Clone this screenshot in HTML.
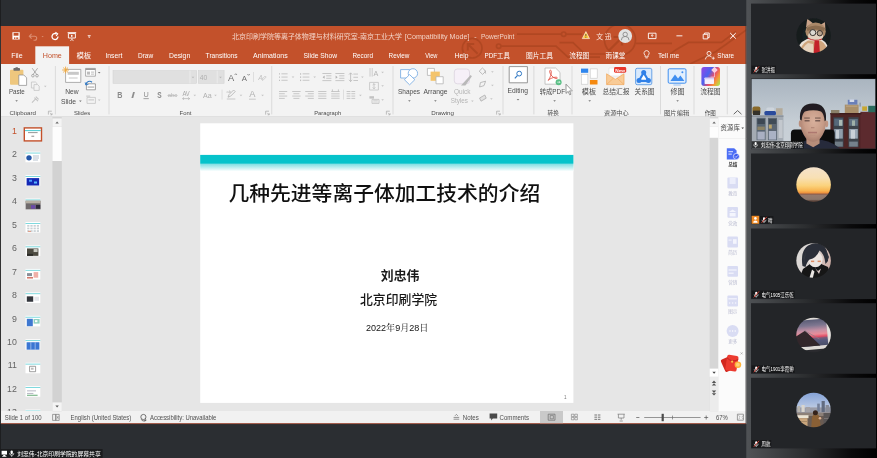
<!DOCTYPE html>
<html lang="zh"><head><meta charset="utf-8"><title>PowerPoint screen share</title>
<style>
html,body{margin:0;padding:0;background:#2b2e32;overflow:hidden}
svg{display:block;font-family:"Liberation Sans","Noto Sans CJK SC",sans-serif;filter:blur(0.4px)}
text{white-space:pre}
</style></head><body>
<svg width="877" height="458" viewBox="0 0 877 458">
<defs>
<linearGradient id="pg" x1="0" x2="1" y1="0" y2="0"><stop offset="0" stop-color="#505356"/><stop offset="0.45" stop-color="#2c2e30"/><stop offset="0.8" stop-color="#0a0a0b"/><stop offset="1" stop-color="#000"/></linearGradient>
<clipPath id="tb"><rect x="1" y="26" width="745.3" height="38"/></clipPath>
<linearGradient id="fl" x1="0" y1="0.2" x2="1" y2="0.8"><stop offset="0" stop-color="#8a4ae6"/><stop offset="0.35" stop-color="#4a62f0"/><stop offset="0.6" stop-color="#e8506a"/><stop offset="0.82" stop-color="#f59a3a"/><stop offset="1" stop-color="#b8d84a"/></linearGradient>
<clipPath id="tp"><rect x="1" y="117.2" width="51" height="293.8"/></clipPath>
<linearGradient id="tg" x1="0" x2="0" y1="0" y2="1"><stop offset="0" stop-color="#06c3cb"/><stop offset="0.5" stop-color="#06c3cb"/><stop offset="0.57" stop-color="#86e0e4"/><stop offset="1" stop-color="#ffffff"/></linearGradient>
<clipPath id="a1"><circle cx="813.6" cy="35.6" r="17.3"/></clipPath>
<filter id="bl" x="-5%" y="-5%" width="110%" height="110%"><feGaussianBlur stdDeviation="0.75"/></filter>
<radialGradient id="catbg" cx="0.5" cy="0.5" r="0.6"><stop offset="0" stop-color="#1d2a2a"/><stop offset="1" stop-color="#0e1415"/></radialGradient>
<clipPath id="v2"><rect x="751.6" y="79" width="123.6" height="69.4"/></clipPath>
<linearGradient id="wall" x1="0" x2="0" y1="0" y2="1"><stop offset="0" stop-color="#a6b1bc"/><stop offset="0.28" stop-color="#b4bec8"/><stop offset="0.6" stop-color="#c6ced5"/><stop offset="1" stop-color="#cbd2d8"/></linearGradient>
<filter id="bl2" x="-10%" y="-10%" width="120%" height="120%"><feGaussianBlur stdDeviation="1.1"/></filter>
<radialGradient id="skin" cx="0.52" cy="0.4" r="0.62"><stop offset="0" stop-color="#d8b09c"/><stop offset="0.6" stop-color="#c79c88"/><stop offset="1" stop-color="#a67c6c"/></radialGradient>
<clipPath id="a3"><circle cx="813.6" cy="184.6" r="17.3"/></clipPath>
<linearGradient id="sun" x1="0" x2="0" y1="0" y2="1"><stop offset="0" stop-color="#f4e2cc"/><stop offset="0.3" stop-color="#f8e0b4"/><stop offset="0.52" stop-color="#fbd27c"/><stop offset="0.66" stop-color="#f8b450"/><stop offset="0.725" stop-color="#ee8e3a"/><stop offset="0.75" stop-color="#8c5a48"/><stop offset="0.785" stop-color="#94796c"/><stop offset="0.9" stop-color="#8b766b"/><stop offset="0.94" stop-color="#5e463c"/><stop offset="1" stop-color="#4a342c"/></linearGradient>
<clipPath id="a4"><circle cx="813.6" cy="260.5" r="17.3"/></clipPath>
<linearGradient id="an" x1="0" x2="1" y1="0" y2="0.3"><stop offset="0" stop-color="#dedcda"/><stop offset="0.55" stop-color="#d8d2cf"/><stop offset="1" stop-color="#cfaea6"/></linearGradient>
<clipPath id="a5"><circle cx="813.6" cy="335" r="17.3"/></clipPath>
<linearGradient id="pk" x1="0" x2="0" y1="0" y2="1"><stop offset="0" stop-color="#5b5d76"/><stop offset="0.22" stop-color="#7d7690"/><stop offset="0.42" stop-color="#c690a4"/><stop offset="0.56" stop-color="#ea8c98"/><stop offset="0.66" stop-color="#e24e66"/><stop offset="0.72" stop-color="#7a5a78"/><stop offset="0.8" stop-color="#565a7c"/><stop offset="1" stop-color="#4b4e68"/></linearGradient>
<clipPath id="a6"><circle cx="813.6" cy="410" r="17.3"/></clipPath>
<linearGradient id="sky" x1="0" x2="0" y1="0" y2="1"><stop offset="0" stop-color="#7f9fd6"/><stop offset="0.55" stop-color="#a9bde0"/><stop offset="0.9" stop-color="#c9d3e4"/><stop offset="1" stop-color="#d2d6de"/></linearGradient>
</defs>
<rect x="0" y="0" width="877" height="458" fill="#2b2e32" />
<rect x="746.3" y="0" width="131" height="458" fill="url(#pg)" />
<rect x="0" y="0" width="1" height="458" fill="#1d1e20" />
<rect x="0" y="26" width="1.1" height="398" fill="#333333" />
<rect x="1" y="26" width="745.3" height="398" fill="#e6e6e6" />
<rect x="1" y="26" width="745.3" height="38.2" fill="#c3512b" />
<rect x="1" y="64" width="745.3" height="52.4" fill="#f3f3f3" />
<rect x="1" y="116.3" width="745.3" height="0.7" fill="#dcdcdc" />
<rect x="1" y="411" width="745.3" height="13" fill="#f1f1f1" />
<rect x="1" y="423.2" width="745.3" height="0.9" fill="#8f3a26" />
<g fill="none" stroke="#a5421e" stroke-width="1.7" opacity="0.62" clip-path="url(#tb)">
<circle cx="472.2" cy="48.2" r="9.8"/><path d="M477.6 53.8l-9.8-9.8m0 6.4v-6.4h6.4" stroke-width="2"/>
<path d="M517 34.2h44.4"/><circle cx="563.7" cy="34.2" r="2.2"/><path d="M566 34.2h16"/>
<circle cx="498.7" cy="46.2" r="2.2"/><path d="M501 46.2h55l12 11h32"/><path d="M559.5 42.6h13.5l12 11.4h20"/>
<circle cx="620" cy="39.7" r="15.5"/><path d="M609 50.5l13-13m-8.5-.5h8.5v8.5" stroke-width="2.2"/>
<path d="M636 43.4h36"/><path d="M668 56l8-6.3 12.5-7.3h33l14.5-11"/><path d="M690 64l26-12.5 31-22"/>
</g>
<path d="M12.4 32.2h7.3v7.4h-7.3z" fill="#ffffff" stroke="none" stroke-width="1" />
<rect x="13.6" y="32.9" width="4.9" height="2.8" fill="#c3512b" />
<rect x="14" y="37.4" width="1.4" height="1.5" fill="#c3512b" />
<rect x="16.2" y="37.4" width="2" height="1.5" fill="#c3512b" />
<path d="M29.5 36.2h5.2a2 2 0 0 1 0 4h-1.2M31.6 33.8l-2.3 2.4 2.3 2.4" fill="none" stroke="#dc8d70" stroke-width="1.1" />
<path d="M41.5 36.1h2.2l-1.1 1.2z" fill="#dc8d70" stroke="none" stroke-width="1" />
<path d="M58 36.6a3 3 0 1 1-1.4-2.6" fill="none" stroke="#ffffff" stroke-width="1.3" />
<path d="M55.4 32.3l2.3 1.5-1.6 2.2" fill="none" stroke="#ffffff" stroke-width="1.1" />
<rect x="67.6" y="32.2" width="8.6" height="1.1" fill="#ffffff" />
<path d="M68.4 33.6h7v4.4h-7z" fill="none" stroke="#ffffff" stroke-width="0.9" />
<path d="M71 34.7l2.4 1.2-2.4 1.2z" fill="#ffffff" stroke="none" stroke-width="1" />
<path d="M71.9 38.2v1.4m-1.6 1l1.6-1 1.6 1" fill="none" stroke="#ffffff" stroke-width="0.8" />
<rect x="87.7" y="35.1" width="3" height="0.7" fill="#ffffff" />
<path d="M87.9 36.45h2.6l-1.3 1.5z" fill="#ffffff" stroke="none" stroke-width="1" />
<text x="232" y="39.2" font-size="6.7" fill="#f3d3c6" textLength="170.00" lengthAdjust="spacingAndGlyphs" >北京印刷学院等离子体物理与材料研究室-南京工业大学</text>
<text x="404.8" y="39.2" font-size="6.9" fill="#f3d3c6" textLength="64.60" lengthAdjust="spacingAndGlyphs" >[Compatibility Mode]</text>
<text x="474.2" y="39.2" font-size="6.9" fill="#f3d3c6" >-</text>
<text x="481" y="39.2" font-size="6.9" fill="#f3d3c6" textLength="33.30" lengthAdjust="spacingAndGlyphs" >PowerPoint</text>
<path d="M585.9 31.6l3.6 7h-7.2z" fill="#ffc83d" stroke="#fff" stroke-width="0.6" />
<rect x="585.55" y="34" width="0.7" height="2.4" fill="#333" />
<rect x="585.55" y="37" width="0.7" height="0.8" fill="#333" />
<text x="596.2" y="39.1" font-size="7" fill="#fbe9e1" textLength="15.40" lengthAdjust="spacingAndGlyphs" >文 迅</text>
<circle cx="625.2" cy="36" r="6.9" fill="#e3e3e3" />
<circle cx="625.2" cy="34.4" r="2.2" fill="none" stroke="#8a8a8a" stroke-width="0.9"/>
<path d="M621.3 40.3a3.9 3.9 0 0 1 7.8 0" fill="none" stroke="#8a8a8a" stroke-width="0.9" />
<path d="M648.4 33.2h7.6v5.4h-7.6z" fill="none" stroke="#ffffff" stroke-width="0.9" />
<path d="M652.2 34.6v2.6m-1.2-1.2l1.2-1.4 1.2 1.4" fill="none" stroke="#ffffff" stroke-width="0.7" />
<rect x="676.4" y="35.4" width="6" height="0.9" fill="#ffffff" />
<path d="M703.2 34.3h4.6v4.6h-4.6z" fill="none" stroke="#ffffff" stroke-width="0.9" />
<path d="M704.6 34.2v-1.2h4.6v4.6h-1.3" fill="none" stroke="#ffffff" stroke-width="0.9" />
<path d="M730.2 33l5.6 5.6m0-5.6l-5.6 5.6" fill="none" stroke="#ffffff" stroke-width="1" />
<rect x="35.3" y="46.3" width="33.8" height="17.8" fill="#f3f3f3" />
<text x="11.2" y="57.7" font-size="7" fill="#ffffff" textLength="11.40" lengthAdjust="spacingAndGlyphs" >File</text>
<text x="76.4" y="57.7" font-size="7" fill="#ffffff" textLength="14.80" lengthAdjust="spacingAndGlyphs" >模板</text>
<text x="105.4" y="57.7" font-size="7" fill="#ffffff" textLength="17.00" lengthAdjust="spacingAndGlyphs" >Insert</text>
<text x="138" y="57.7" font-size="7" fill="#ffffff" textLength="15.20" lengthAdjust="spacingAndGlyphs" >Draw</text>
<text x="169" y="57.7" font-size="7" fill="#ffffff" textLength="21.20" lengthAdjust="spacingAndGlyphs" >Design</text>
<text x="205.6" y="57.7" font-size="7" fill="#ffffff" textLength="32.00" lengthAdjust="spacingAndGlyphs" >Transitions</text>
<text x="253.1" y="57.7" font-size="7" fill="#ffffff" textLength="34.60" lengthAdjust="spacingAndGlyphs" >Animations</text>
<text x="303.5" y="57.7" font-size="7" fill="#ffffff" textLength="33.70" lengthAdjust="spacingAndGlyphs" >Slide Show</text>
<text x="352.5" y="57.7" font-size="7" fill="#ffffff" textLength="20.50" lengthAdjust="spacingAndGlyphs" >Record</text>
<text x="388.6" y="57.7" font-size="7" fill="#ffffff" textLength="20.80" lengthAdjust="spacingAndGlyphs" >Review</text>
<text x="425.2" y="57.7" font-size="7" fill="#ffffff" textLength="12.20" lengthAdjust="spacingAndGlyphs" >View</text>
<text x="454.6" y="57.7" font-size="7" fill="#ffffff" textLength="13.80" lengthAdjust="spacingAndGlyphs" >Help</text>
<text x="484.4" y="57.7" font-size="7" fill="#ffffff" textLength="25.40" lengthAdjust="spacingAndGlyphs" >PDF工具</text>
<text x="526" y="57.7" font-size="7" fill="#ffffff" textLength="27.00" lengthAdjust="spacingAndGlyphs" >图片工具</text>
<text x="569.2" y="57.7" font-size="7" fill="#ffffff" textLength="20.10" lengthAdjust="spacingAndGlyphs" >流程图</text>
<text x="605.6" y="57.7" font-size="7" fill="#ffffff" textLength="19.60" lengthAdjust="spacingAndGlyphs" >雨课堂</text>
<text x="658" y="57.7" font-size="7" fill="#ffffff" textLength="21.20" lengthAdjust="spacingAndGlyphs" >Tell me</text>
<text x="717.2" y="57.7" font-size="7" fill="#ffffff" textLength="16.80" lengthAdjust="spacingAndGlyphs" >Share</text>
<text x="42.8" y="57.7" font-size="7" fill="#c3512b" textLength="19.00" lengthAdjust="spacingAndGlyphs" >Home</text>
<path d="M646.6 50.6a2.6 2.6 0 0 1 1.5 4.7v1.6h-3v-1.6a2.6 2.6 0 0 1 1.5-4.7z" fill="none" stroke="#ffffff" stroke-width="0.8" />
<rect x="645.5" y="57.6" width="2.2" height="0.7" fill="#ffffff" />
<circle cx="709" cy="53.4" r="2" fill="none" stroke="#fff" stroke-width="0.8"/>
<path d="M705.4 59.4a3.6 3.6 0 0 1 6.2-2.4" fill="none" stroke="#ffffff" stroke-width="0.8" />
<path d="M711.8 58.2h3m-1.5-1.5v3" fill="none" stroke="#ffffff" stroke-width="0.7" />
<rect x="10" y="69.8" width="13.4" height="15" fill="#eec77e" rx="1"/>
<rect x="13.4" y="68" width="6.6" height="2.8" fill="#6d6d6d" rx="0.8"/>
<rect x="15.3" y="67.2" width="2.8" height="1.6" fill="#6d6d6d" rx="0.8"/>
<path d="M18.8 75h5l2.8 2.8v7.6h-7.8z" fill="#ffffff" stroke="#8a8a8a" stroke-width="0.7" />
<text x="8.9" y="94.3" font-size="7" fill="#4c4c4c" textLength="15.80" lengthAdjust="spacingAndGlyphs" >Paste</text>
<path d="M15.3 100.15h2.6l-1.3 1.5z" fill="#777" stroke="none" stroke-width="1" />
<path d="M32.2 68.2l4.6 6.4m.8-6.4l-4.6 6.4" fill="none" stroke="#9a9a9a" stroke-width="0.8" />
<circle cx="32.9" cy="75.7" r="1.3" fill="none" stroke="#9a9a9a" stroke-width="0.8"/>
<circle cx="37" cy="75.7" r="1.3" fill="none" stroke="#9a9a9a" stroke-width="0.8"/>
<path d="M31.4 82h4l1.6 1.6v4.4h-5.6z" fill="none" stroke="#c4c4c4" stroke-width="0.8" />
<path d="M34 84.6h3.6l1.6 1.6v4.2h-5.2z" fill="#f3f3f3" stroke="#c4c4c4" stroke-width="0.8" />
<path d="M44 85.65h2.6l-1.3 1.5z" fill="#c4c4c4" stroke="none" stroke-width="1" />
<path d="M32 102.6l3.4-3.4m-1-1.6l3.6 3.6m-2.2-4.6l2.8 2.8" fill="none" stroke="#c4c4c4" stroke-width="1.1" />
<text x="9.6" y="114.8" font-size="6.1" fill="#4a4a4a" textLength="26.40" lengthAdjust="spacingAndGlyphs" >Clipboard</text>
<path d="M48.4 114.6v-3.4h3.4" fill="none" stroke="#a8a8a8" stroke-width="0.7" />
<path d="M50 112.8l2 2m0-1.6v1.6h-1.6" fill="none" stroke="#a8a8a8" stroke-width="0.7" />
<rect x="54.9" y="66" width="0.8" height="48.4" fill="#d4d4d4" />
<path d="M65.6 69.4h15.2v13h-15.2z" fill="#ffffff" stroke="#9a9a9a" stroke-width="0.8" />
<rect x="67.6" y="71.8" width="11.2" height="3" fill="#c8c8c8" />
<rect x="68.8" y="77.2" width="8.8" height="1.6" fill="#dcdcdc" />
<path d="M65.6 66.6v6.8M62.2 70h6.8M63.2 67.6l4.8 4.8m0-4.8l-4.8 4.8" fill="none" stroke="#f0a83c" stroke-width="0.9" />
<text x="65.2" y="94.3" font-size="7" fill="#4c4c4c" textLength="13.40" lengthAdjust="spacingAndGlyphs" >New</text>
<text x="61" y="103.5" font-size="7" fill="#4c4c4c" textLength="15.00" lengthAdjust="spacingAndGlyphs" >Slide</text>
<path d="M79.1 100.45h2.6l-1.3 1.5z" fill="#777" stroke="none" stroke-width="1" />
<path d="M85.6 68.4h9.8v7.8h-9.8z" fill="#ffffff" stroke="#9c9c9c" stroke-width="0.8" />
<rect x="85.6" y="68.4" width="9.8" height="1.6" fill="#9c9c9c" />
<rect x="87" y="71.6" width="3" height="3" fill="#bdbdbd" />
<rect x="91" y="71.6" width="3" height="1" fill="#bdbdbd" />
<rect x="91" y="73.6" width="3" height="1" fill="#bdbdbd" />
<path d="M97.9 72.05h2.6l-1.3 1.5z" fill="#777" stroke="none" stroke-width="1" />
<path d="M86.4 83.8h9v6h-9z" fill="#ffffff" stroke="#8a8a8a" stroke-width="0.8" />
<rect x="87.6" y="86.4" width="6.6" height="1.4" fill="#bbb" />
<path d="M86 84.6a3.6 3.6 0 0 1 6-2.4" fill="none" stroke="#2f78c4" stroke-width="1.2" />
<path d="M85.2 82.4l.6 2.6 2.6-.6" fill="none" stroke="#2f78c4" stroke-width="0.9" />
<path d="M87 97.4h8.4v6h-8.4z" fill="none" stroke="#c4c4c4" stroke-width="0.8" />
<rect x="86.2" y="95.6" width="4" height="1" fill="#c4c4c4" />
<rect x="88.4" y="99.4" width="5.6" height="1" fill="#c4c4c4" />
<path d="M97.9 99.45h2.6l-1.3 1.5z" fill="#c4c4c4" stroke="none" stroke-width="1" />
<text x="74" y="114.8" font-size="6.1" fill="#4a4a4a" textLength="16.20" lengthAdjust="spacingAndGlyphs" >Slides</text>
<rect x="108.6" y="66" width="0.8" height="48.4" fill="#d4d4d4" />
<rect x="113" y="70.6" width="83.6" height="12.8" fill="#e0e0e0" stroke="#d0d0d0" stroke-width="0.5"/>
<rect x="189.6" y="70.6" width="0.7" height="12.8" fill="#f0f0f0" />
<path d="M191.7 76.65h2.6l-1.3 1.5z" fill="#b9b9b9" stroke="none" stroke-width="1" />
<rect x="198.3" y="70.6" width="25.8" height="12.8" fill="#e0e0e0" stroke="#d0d0d0" stroke-width="0.5"/>
<rect x="216.8" y="70.6" width="0.7" height="12.8" fill="#f0f0f0" />
<path d="M219.2 76.65h2.6l-1.3 1.5z" fill="#b9b9b9" stroke="none" stroke-width="1" />
<text x="199.8" y="79.6" font-size="7" fill="#b0b0b0" textLength="7.60" lengthAdjust="spacingAndGlyphs" >40</text>
<text x="228" y="81.2" font-size="9.4" fill="#6e6e6e" textLength="6.20" lengthAdjust="spacingAndGlyphs" >A</text>
<path d="M234.6 75l1.2-1.3 1.2 1.3" fill="none" stroke="#6e6e6e" stroke-width="0.7" />
<text x="241.8" y="81.2" font-size="8" fill="#6e6e6e" textLength="5.20" lengthAdjust="spacingAndGlyphs" >A</text>
<path d="M247.4 74l1.2 1.3 1.2-1.3" fill="none" stroke="#6e6e6e" stroke-width="0.7" />
<rect x="253.2" y="72" width="0.7" height="10" fill="#d4d4d4" />
<text x="258.2" y="80.4" font-size="7.4" fill="#c4c4c4" textLength="4.80" lengthAdjust="spacingAndGlyphs" font-style="italic">A</text>
<path d="M261.6 79.6l3.6-3.6 1 1-3.6 3.6z" fill="none" stroke="#c4c4c4" stroke-width="0.7" />
<text x="117.2" y="97.6" font-size="8.4" fill="#8a8a8a" textLength="5.20" lengthAdjust="spacingAndGlyphs" font-weight="700" >B</text>
<text x="131.2" y="97.6" font-size="8.4" fill="#8e8e8e" textLength="3.40" lengthAdjust="spacingAndGlyphs" font-weight="700" font-style="italic">I</text>
<text x="143.5" y="97.2" font-size="8" fill="#8e8e8e" textLength="5.30" lengthAdjust="spacingAndGlyphs" >U</text>
<rect x="143.5" y="98.3" width="5.3" height="0.8" fill="#8e8e8e" />
<text x="157.2" y="97.6" font-size="8.4" fill="#8a8a8a" textLength="4.40" lengthAdjust="spacingAndGlyphs" font-weight="700" >S</text>
<text x="167.8" y="97.2" font-size="6" fill="#b4b4b4" textLength="9.40" lengthAdjust="spacingAndGlyphs" >abc</text>
<rect x="167.4" y="95" width="10.2" height="0.6" fill="#b4b4b4" />
<text x="182.4" y="96" font-size="6.4" fill="#a8a8a8" textLength="7.40" lengthAdjust="spacingAndGlyphs" >AV</text>
<path d="M182.6 98.6h7m-1.4-1.2l1.4 1.2-1.4 1.2m-4.2-2.4l-1.4 1.2 1.4 1.2" fill="none" stroke="#a8a8a8" stroke-width="0.6" />
<path d="M193.5 94.65h2.6l-1.3 1.5z" fill="#c4c4c4" stroke="none" stroke-width="1" />
<text x="202.9" y="97.6" font-size="7.6" fill="#b0b0b0" textLength="8.70" lengthAdjust="spacingAndGlyphs" >Aa</text>
<path d="M214.2 94.65h2.6l-1.3 1.5z" fill="#c4c4c4" stroke="none" stroke-width="1" />
<rect x="221.7" y="89.6" width="0.7" height="10" fill="#d4d4d4" />
<path d="M228 97.2l1-2.6 4.6-4.6 1.6 1.6-4.6 4.6z" fill="none" stroke="#b0b0b0" stroke-width="0.8" />
<rect x="226.8" y="98.4" width="8.6" height="1.2" fill="#cfcfcf" />
<text x="226.6" y="93" font-size="4" fill="#b8b8b8" >ab</text>
<path d="M239.7 94.65h2.6l-1.3 1.5z" fill="#c4c4c4" stroke="none" stroke-width="1" />
<text x="249.3" y="97" font-size="8.6" fill="#b0b0b0" textLength="6.20" lengthAdjust="spacingAndGlyphs" >A</text>
<rect x="249" y="98.6" width="6.8" height="1.2" fill="#cfcfcf" />
<path d="M261.3 94.65h2.6l-1.3 1.5z" fill="#c4c4c4" stroke="none" stroke-width="1" />
<text x="179.6" y="114.8" font-size="6.1" fill="#4a4a4a" textLength="11.80" lengthAdjust="spacingAndGlyphs" >Font</text>
<path d="M265.6 114.6v-3.4h3.4" fill="none" stroke="#a8a8a8" stroke-width="0.7" />
<path d="M267.2 112.8l2 2m0-1.6v1.6h-1.6" fill="none" stroke="#a8a8a8" stroke-width="0.7" />
<rect x="271.4" y="66" width="0.8" height="48.4" fill="#d4d4d4" />
<rect x="279" y="73.4" width="1" height="1" fill="#b4b4b4" />
<rect x="281.4" y="73.4" width="6.2" height="0.9" fill="#c2c2c2" />
<rect x="279" y="76.6" width="1" height="1" fill="#b4b4b4" />
<rect x="281.4" y="76.6" width="6.2" height="0.9" fill="#c2c2c2" />
<rect x="279" y="79.8" width="1" height="1" fill="#b4b4b4" />
<rect x="281.4" y="79.8" width="6.2" height="0.9" fill="#c2c2c2" />
<path d="M291.7 76.45h2.6l-1.3 1.5z" fill="#c4c4c4" stroke="none" stroke-width="1" />
<rect x="300.2" y="73.2" width="0.9" height="1.5" fill="#b4b4b4" />
<rect x="302.6" y="73.4" width="6.8" height="0.9" fill="#c2c2c2" />
<rect x="300.2" y="76.4" width="0.9" height="1.5" fill="#b4b4b4" />
<rect x="302.6" y="76.6" width="6.8" height="0.9" fill="#c2c2c2" />
<rect x="300.2" y="79.6" width="0.9" height="1.5" fill="#b4b4b4" />
<rect x="302.6" y="79.8" width="6.8" height="0.9" fill="#c2c2c2" />
<path d="M313.4 76.45h2.6l-1.3 1.5z" fill="#c4c4c4" stroke="none" stroke-width="1" />
<rect x="322.4" y="73" width="9" height="0.9" fill="#c2c2c2" />
<rect x="326.2" y="75.4" width="5.2" height="0.9" fill="#c2c2c2" />
<rect x="326.2" y="77.8" width="5.2" height="0.9" fill="#c2c2c2" />
<rect x="322.4" y="80.2" width="9" height="0.9" fill="#c2c2c2" />
<path d="M324.6 75.6l-2 1.6 2 1.6z" fill="#b0b0b0" stroke="none" stroke-width="1" />
<rect x="335.4" y="73" width="9" height="0.9" fill="#c2c2c2" />
<rect x="339.2" y="75.4" width="5.2" height="0.9" fill="#c2c2c2" />
<rect x="339.2" y="77.8" width="5.2" height="0.9" fill="#c2c2c2" />
<rect x="335.4" y="80.2" width="9" height="0.9" fill="#c2c2c2" />
<path d="M335.6 75.6l2 1.6-2 1.6z" fill="#b0b0b0" stroke="none" stroke-width="1" />
<path d="M350.6 73v8.4m-1.6-6.8l1.6-1.8 1.6 1.8m-3.2 5.2l1.6 1.8 1.6-1.8" fill="none" stroke="#b0b0b0" stroke-width="0.7" />
<rect x="353.4" y="73.6" width="4.6" height="0.9" fill="#c2c2c2" />
<rect x="353.4" y="76.8" width="4.6" height="0.9" fill="#c2c2c2" />
<rect x="353.4" y="80" width="4.6" height="0.9" fill="#c2c2c2" />
<path d="M361.1 76.45h2.6l-1.3 1.5z" fill="#c4c4c4" stroke="none" stroke-width="1" />
<path d="M370 68v8.6m2.2-8.6v8.6" fill="none" stroke="#c2c2c2" stroke-width="0.8" />
<text x="373.6" y="76.4" font-size="7.4" fill="#b4b4b4" textLength="4.80" lengthAdjust="spacingAndGlyphs" >A</text>
<path d="M381.3 71.65h2.6l-1.3 1.5z" fill="#c4c4c4" stroke="none" stroke-width="1" />
<path d="M369.6 82.4h8.8v7.6h-8.8z" fill="none" stroke="#c2c2c2" stroke-width="0.8" />
<path d="M374 83.6v5.2m-1.4-3.8l1.4-1.4 1.4 1.4m-2.8 2.4l1.4 1.4 1.4-1.4" fill="none" stroke="#b0b0b0" stroke-width="0.6" />
<path d="M381.3 85.25h2.6l-1.3 1.5z" fill="#c4c4c4" stroke="none" stroke-width="1" />
<path d="M369.4 96.2h4.6v2.4h-4.6z" fill="#c2c2c2" stroke="none" stroke-width="1" />
<path d="M372 99.4h7v4h-7z" fill="#f3f3f3" stroke="#c2c2c2" stroke-width="0.8" />
<path d="M373.2 100.6h4.6m-4.6 1.4h4.6" fill="none" stroke="#c2c2c2" stroke-width="0.6" />
<path d="M381.3 99.25h2.6l-1.3 1.5z" fill="#c4c4c4" stroke="none" stroke-width="1" />
<rect x="279" y="91" width="8.2" height="0.9" fill="#c2c2c2" />
<rect x="279" y="93.3" width="5.74" height="0.9" fill="#c2c2c2" />
<rect x="279" y="95.6" width="8.2" height="0.9" fill="#c2c2c2" />
<rect x="279" y="97.9" width="5.74" height="0.9" fill="#c2c2c2" />
<rect x="292.2" y="91" width="8.4" height="0.9" fill="#c2c2c2" />
<rect x="293.4" y="93.3" width="6" height="0.9" fill="#c2c2c2" />
<rect x="292.2" y="95.6" width="8.4" height="0.9" fill="#c2c2c2" />
<rect x="293.4" y="97.9" width="6" height="0.9" fill="#c2c2c2" />
<rect x="305.2" y="91" width="8.6" height="0.9" fill="#c2c2c2" />
<rect x="307.8" y="93.3" width="6" height="0.9" fill="#c2c2c2" />
<rect x="305.2" y="95.6" width="8.6" height="0.9" fill="#c2c2c2" />
<rect x="307.8" y="97.9" width="6" height="0.9" fill="#c2c2c2" />
<rect x="318.2" y="91" width="8.2" height="0.9" fill="#c2c2c2" />
<rect x="318.2" y="93.3" width="8.2" height="0.9" fill="#c2c2c2" />
<rect x="318.2" y="95.6" width="8.2" height="0.9" fill="#c2c2c2" />
<rect x="318.2" y="97.9" width="8.2" height="0.9" fill="#c2c2c2" />
<rect x="331.2" y="91" width="8.4" height="0.9" fill="#c2c2c2" />
<rect x="331.2" y="93.4" width="8.4" height="0.9" fill="#c4c4c4" />
<rect x="331.2" y="95.6" width="8.4" height="0.9" fill="#c4c4c4" />
<rect x="331.2" y="97.8" width="8.4" height="0.9" fill="#c4c4c4" />
<path d="M332.4 89.4v2m6-2v2" fill="none" stroke="#b4b4b4" stroke-width="0.7" />
<rect x="343" y="89.6" width="0.7" height="10" fill="#d4d4d4" />
<rect x="346.6" y="91" width="3.8" height="0.9" fill="#c2c2c2" />
<rect x="346.6" y="93.3" width="3.8" height="0.9" fill="#c2c2c2" />
<rect x="346.6" y="95.6" width="3.8" height="0.9" fill="#c2c2c2" />
<rect x="346.6" y="97.9" width="3.8" height="0.9" fill="#c2c2c2" />
<rect x="351.4" y="91" width="3.8" height="0.9" fill="#c2c2c2" />
<rect x="351.4" y="93.3" width="3.8" height="0.9" fill="#c2c2c2" />
<rect x="351.4" y="95.6" width="3.8" height="0.9" fill="#c2c2c2" />
<rect x="351.4" y="97.9" width="3.8" height="0.9" fill="#c2c2c2" />
<path d="M359.1 94.65h2.6l-1.3 1.5z" fill="#c4c4c4" stroke="none" stroke-width="1" />
<text x="314.2" y="114.8" font-size="6.1" fill="#4a4a4a" textLength="27.00" lengthAdjust="spacingAndGlyphs" >Paragraph</text>
<path d="M386.4 114.6v-3.4h3.4" fill="none" stroke="#a8a8a8" stroke-width="0.7" />
<path d="M388 112.8l2 2m0-1.6v1.6h-1.6" fill="none" stroke="#a8a8a8" stroke-width="0.7" />
<rect x="392.6" y="66" width="0.8" height="48.4" fill="#d4d4d4" />
<path d="M400.6 69.6h9.2v8.4h-9.2z" fill="#ffffff" stroke="#7fb0e4" stroke-width="0.9" />
<circle cx="412.9" cy="73.4" r="4.7" fill="#ffffff" stroke="#7fb0e4" stroke-width="0.9"/>
<path d="M409.6 74.6l5.2 5.1-5.2 5.1-5.2-5.1z" fill="#ffffff" stroke="#7fb0e4" stroke-width="0.9" />
<text x="398" y="93.7" font-size="7" fill="#4c4c4c" textLength="22.00" lengthAdjust="spacingAndGlyphs" >Shapes</text>
<path d="M408.1 100.25h2.6l-1.3 1.5z" fill="#777" stroke="none" stroke-width="1" />
<path d="M427.4 68.4h7v7h-7z" fill="#ffffff" stroke="#b4b4b4" stroke-width="0.8" />
<rect x="430.6" y="71.6" width="9.2" height="9.2" fill="#f4c46c" />
<path d="M436 76.7h7.2v7.1h-7.2z" fill="#ffffff" stroke="#b4b4b4" stroke-width="0.8" />
<text x="423.6" y="93.7" font-size="7" fill="#4c4c4c" textLength="24.00" lengthAdjust="spacingAndGlyphs" >Arrange</text>
<path d="M434.1 100.25h2.6l-1.3 1.5z" fill="#777" stroke="none" stroke-width="1" />
<path d="M457.3 69h9.2a3 3 0 0 1 3 3v8.8a3 3 0 0 1-3 3h-9.2a3 3 0 0 1-3-3v-8.8a3 3 0 0 1 3-3z" fill="#f6f0f8" stroke="#dbd3de" stroke-width="0.8" />
<path d="M461 85.4l9.6-10.4 1.3 1.2-6.5 9.2z" fill="#b9b9b9" stroke="none" stroke-width="1" />
<text x="454" y="93.7" font-size="7" fill="#b4b4b4" textLength="16.60" lengthAdjust="spacingAndGlyphs" >Quick</text>
<text x="450.8" y="103.2" font-size="7" fill="#b4b4b4" textLength="17.20" lengthAdjust="spacingAndGlyphs" >Styles</text>
<path d="M471.1 100.45h2.6l-1.3 1.5z" fill="#c4c4c4" stroke="none" stroke-width="1" />
<path d="M482.4 68l3.4 3.2-3.2 3.2-3.4-3.2zM484.8 70.4l.9 3.2" fill="none" stroke="#adadad" stroke-width="0.8" />
<path d="M491.1 71.25h2.6l-1.3 1.5z" fill="#c4c4c4" stroke="none" stroke-width="1" />
<path d="M479.6 87l.8-4.4 5.2-1.4-1.6 4.4z" fill="none" stroke="#adadad" stroke-width="0.8" />
<path d="M491.1 84.65h2.6l-1.3 1.5z" fill="#c4c4c4" stroke="none" stroke-width="1" />
<path d="M479.6 98l5.2-3 1.4 3.2-5.2 3z" fill="#e2e2e2" stroke="#adadad" stroke-width="0.8" />
<path d="M490.1 98.25h2.6l-1.3 1.5z" fill="#c4c4c4" stroke="none" stroke-width="1" />
<text x="431.2" y="114.8" font-size="6.1" fill="#4a4a4a" textLength="22.80" lengthAdjust="spacingAndGlyphs" >Drawing</text>
<path d="M496.6 114.6v-3.4h3.4" fill="none" stroke="#a8a8a8" stroke-width="0.7" />
<path d="M498.2 112.8l2 2m0-1.6v1.6h-1.6" fill="none" stroke="#a8a8a8" stroke-width="0.7" />
<rect x="502.6" y="66" width="0.8" height="48.4" fill="#d4d4d4" />
<path d="M509.2 66.6h18.2v16.2h-18.2z" fill="#ffffff" stroke="#8c8c8c" stroke-width="0.9" />
<circle cx="519.2" cy="73.6" r="2.4" fill="none" stroke="#2f78c4" stroke-width="1"/>
<path d="M517.4 75.6l-2.6 2.8" fill="none" stroke="#2f78c4" stroke-width="1.2" />
<text x="507.4" y="93.4" font-size="7" fill="#4c4c4c" textLength="20.60" lengthAdjust="spacingAndGlyphs" >Editing</text>
<path d="M516.7 99.05h2.6l-1.3 1.5z" fill="#777" stroke="none" stroke-width="1" />
<rect x="533.5" y="66" width="0.8" height="48.4" fill="#d4d4d4" />
<path d="M545 68h10.6l4.4 4.4v11.8h-15z" fill="#ffffff" stroke="#b8b8b8" stroke-width="0.8" />
<path d="M548.2 80.4c2.4-3.2 3.4-7 3-9.4-.3-1.4-1.8-1-1.6.6.4 3 3.4 6.4 6.6 7 1.6.2 1.6-1.4-.2-1.4-2.6 0-5.8 1.2-7.8 3.2z" fill="none" stroke="#e2574c" stroke-width="0.9" />
<circle cx="558.6" cy="82.2" r="3" fill="#5bbf86" />
<path d="M557.2 82.2h2.8m-1-1l1 1-1 1" fill="none" stroke="#ffffff" stroke-width="0.6" />
<text x="539.7" y="93.7" font-size="7" fill="#4c4c4c" textLength="25.30" lengthAdjust="spacingAndGlyphs" >转成PDF</text>
<path d="M553.3 100.25h2.6l-1.3 1.5z" fill="#777" stroke="none" stroke-width="1" />
<text x="547.6" y="114.5" font-size="6" fill="#4a4a4a" textLength="11.20" lengthAdjust="spacingAndGlyphs" >转换</text>
<path d="M566 84.2v9.2l2.2-2 1.5 3.4 1.3-.6-1.5-3.3h2.9z" fill="#ffffff" stroke="#555" stroke-width="0.6" />
<rect x="571.6" y="66" width="0.8" height="48.4" fill="#d4d4d4" />
<rect x="581" y="68.6" width="7.2" height="4.2" fill="#2f86ee" />
<rect x="581.3" y="74.3" width="6.6" height="9.9" fill="#ffffff" stroke="#c6c6c6" stroke-width="0.6"/>
<rect x="590.2" y="68.9" width="7" height="9.3" fill="#ffffff" stroke="#c6c6c6" stroke-width="0.6"/>
<rect x="589.9" y="80" width="7.6" height="4.5" fill="#f5890f" />
<text x="581.8" y="93.7" font-size="7" fill="#4c4c4c" textLength="14.20" lengthAdjust="spacingAndGlyphs" >模板</text>
<path d="M588.4 100.25h2.6l-1.3 1.5z" fill="#777" stroke="none" stroke-width="1" />
<path d="M609 76v-8h12v8z" fill="#ffffff" stroke="#d8d8d8" stroke-width="0.5" />
<path d="M606.6 73.8l8.7 5.6 8.7-5.6v10.8h-17.4z" fill="#f9cb96" stroke="#f0a558" stroke-width="0.7" />
<path d="M606.8 84.4l6.6-6.2M623.8 84.4l-6.6-6.2" fill="none" stroke="#f0a558" stroke-width="0.6" />
<rect x="614" y="67.1" width="12.2" height="5.6" fill="#e8382d" rx="1.4"/>
<text x="615.2" y="71.6" font-size="4.4" fill="#ffffff" textLength="9.80" lengthAdjust="spacingAndGlyphs" font-weight="700" >New</text>
<text x="602.6" y="93.7" font-size="7" fill="#4c4c4c" textLength="27.00" lengthAdjust="spacingAndGlyphs" >总结汇报</text>
<rect x="635.6" y="68.3" width="16.2" height="16.4" fill="#d8e9fc" rx="1.6" stroke="#4a90e2" stroke-width="0.8"/>
<path d="M643.7 72.8l4.8 8h-9.6z" fill="#ffffff" stroke="#2f80e8" stroke-width="2.2" stroke-linejoin="round"/>
<circle cx="643.7" cy="72.4" r="2.5" fill="#2f80e8" />
<circle cx="639" cy="80.6" r="2.5" fill="#2f80e8" />
<circle cx="648.4" cy="80.6" r="2.5" fill="#2f80e8" />
<text x="634.5" y="93.7" font-size="7" fill="#4c4c4c" textLength="20.00" lengthAdjust="spacingAndGlyphs" >关系图</text>
<text x="604" y="114.5" font-size="6" fill="#4a4a4a" textLength="24.70" lengthAdjust="spacingAndGlyphs" >资源中心</text>
<rect x="660.2" y="66" width="0.8" height="48.4" fill="#d4d4d4" />
<rect x="668.2" y="68.8" width="17.8" height="14.4" fill="#e2effd" rx="1.2" stroke="#3f8ef0" stroke-width="1"/>
<path d="M670.4 81l4.6-6.6 3 4 2.4-2.8 4 5.4z" fill="#3f8ef0" stroke="none" stroke-width="1" />
<circle cx="682.4" cy="72.2" r="1" fill="#3f8ef0" />
<rect x="673.4" y="84.6" width="7.4" height="0.8" fill="#7db3f5" />
<text x="670.6" y="93.7" font-size="7" fill="#4c4c4c" textLength="14.00" lengthAdjust="spacingAndGlyphs" >修图</text>
<path d="M676.3 100.25h2.6l-1.3 1.5z" fill="#777" stroke="none" stroke-width="1" />
<text x="664" y="114.5" font-size="6" fill="#4a4a4a" textLength="25.30" lengthAdjust="spacingAndGlyphs" >图片编辑</text>
<rect x="693.6" y="66" width="0.8" height="48.4" fill="#d4d4d4" />
<rect x="701.4" y="66.9" width="18.6" height="19" fill="url(#fl)" rx="2.6"/>
<rect x="712.2" y="67.8" width="4.6" height="4.6" fill="#fbd0e0" transform="rotate(45 714.5 70.1)"/>
<path d="M714.5 73v4h-4" fill="none" stroke="#f0e0ff" stroke-width="0.6" />
<rect x="704.6" y="77.7" width="9.4" height="6.2" fill="#f4f0ff" rx="0.6"/>
<rect x="704.6" y="77.7" width="9.4" height="1.6" fill="#d8ccf8" />
<text x="700.2" y="93.7" font-size="7" fill="#4c4c4c" textLength="20.40" lengthAdjust="spacingAndGlyphs" >流程图</text>
<text x="704.8" y="114.5" font-size="6" fill="#4a4a4a" textLength="11.00" lengthAdjust="spacingAndGlyphs" >作图</text>
<rect x="726.8" y="66" width="0.8" height="48.4" fill="#d4d4d4" />
<path d="M733.7 114.2l3.9-3.6 3.9 3.6" fill="none" stroke="#555" stroke-width="0.9" />
<rect x="52.4" y="117.2" width="9.4" height="294" fill="#d2d2d2" />
<rect x="52.4" y="118.4" width="9.4" height="8.4" fill="#f4f4f4" />
<path d="M55.4 123.6l1.7-2 1.7 2z" fill="#666" stroke="none" stroke-width="1" />
<rect x="52.4" y="127" width="9.4" height="34" fill="#fdfdfd" />
<rect x="52.4" y="402.4" width="9.4" height="8.6" fill="#f4f4f4" />
<path d="M55.4 405.6l1.7 2 1.7-2z" fill="#555" stroke="none" stroke-width="1" />
<g clip-path="url(#tp)">
<text x="16.8" y="133.9" font-size="8.8" fill="#c3512b" text-anchor="end" >1</text>
<rect x="23.6" y="127.2" width="18.6" height="14.4" fill="#c3512b" />
<rect x="25" y="128.6" width="15.8" height="11.6" fill="#ffffff" />
<rect x="25" y="130.2" width="15.8" height="0.9" fill="#35c4cc" />
<rect x="28" y="132.2" width="9.6" height="0.9" fill="#8a8a8a" />
<rect x="31.4" y="135.6" width="2.8" height="1.4" fill="#aaa" />
<text x="16.8" y="157.35" font-size="8.8" fill="#646464" text-anchor="end" >2</text>
<rect x="25.5" y="151.65" width="14.8" height="10.6" fill="#ffffff" />
<rect x="25.5" y="152.65" width="14.8" height="0.8" fill="#5fd0d6" />
<circle cx="29" cy="157.85" r="2.7" fill="#2457a8" />
<rect x="33" y="155.65" width="6" height="0.7" fill="#9ab" />
<rect x="33" y="157.65" width="6" height="0.7" fill="#9ab" />
<rect x="33" y="159.65" width="5" height="0.7" fill="#9ab" />
<text x="16.8" y="180.8" font-size="8.8" fill="#646464" text-anchor="end" >3</text>
<rect x="25.5" y="175.1" width="14.8" height="10.6" fill="#ffffff" />
<rect x="25.5" y="176.1" width="14.8" height="0.8" fill="#5fd0d6" />
<rect x="26.6" y="178.1" width="12.6" height="7.4" fill="#1428b4" />
<rect x="29" y="179.7" width="3" height="2" fill="#4aa0ff" />
<rect x="34" y="181.5" width="3" height="2" fill="#58b6ff" />
<text x="16.8" y="204.25" font-size="8.8" fill="#646464" text-anchor="end" >4</text>
<rect x="25.5" y="198.55" width="14.8" height="10.6" fill="#ffffff" />
<rect x="25.5" y="199.55" width="14.8" height="0.8" fill="#5fd0d6" />
<rect x="25.6" y="200.75" width="15" height="8.6" fill="#6f6a6c" />
<rect x="25.6" y="200.75" width="15" height="2.6" fill="#b7b0a4" />
<rect x="31" y="205.15" width="4.4" height="3.6" fill="#6a4aa8" />
<rect x="36" y="204.95" width="4.2" height="3.8" fill="#2d2a3a" />
<text x="16.8" y="227.7" font-size="8.8" fill="#646464" text-anchor="end" >5</text>
<rect x="25.5" y="222" width="14.8" height="10.6" fill="#ffffff" />
<rect x="25.5" y="223" width="14.8" height="0.8" fill="#5fd0d6" />
<rect x="27.2" y="225" width="2.2" height="1.7" fill="#c8d0d4" />
<rect x="27.2" y="227.6" width="2.2" height="1.7" fill="#c8d0d4" />
<rect x="27.2" y="230.2" width="2.2" height="1.7" fill="#c8d0d4" />
<rect x="30.4" y="225" width="2.2" height="1.7" fill="#c8d0d4" />
<rect x="30.4" y="227.6" width="2.2" height="1.7" fill="#c8d0d4" />
<rect x="30.4" y="230.2" width="2.2" height="1.7" fill="#c8d0d4" />
<rect x="33.6" y="225" width="2.2" height="1.7" fill="#c8d0d4" />
<rect x="33.6" y="227.6" width="2.2" height="1.7" fill="#c8d0d4" />
<rect x="33.6" y="230.2" width="2.2" height="1.7" fill="#c8d0d4" />
<rect x="36.8" y="225" width="2.2" height="1.7" fill="#c8d0d4" />
<rect x="36.8" y="227.6" width="2.2" height="1.7" fill="#c8d0d4" />
<rect x="36.8" y="230.2" width="2.2" height="1.7" fill="#c8d0d4" />
<rect x="28" y="230.8" width="3" height="1.2" fill="#e0a08a" />
<text x="16.8" y="251.15" font-size="8.8" fill="#646464" text-anchor="end" >6</text>
<rect x="25.5" y="245.45" width="14.8" height="10.6" fill="#ffffff" />
<rect x="25.5" y="246.45" width="14.8" height="0.8" fill="#5fd0d6" />
<rect x="27" y="248.45" width="11.4" height="7.4" fill="#4c4a40" />
<rect x="33.6" y="249.05" width="4" height="3" fill="#c8c8c0" />
<rect x="27" y="253.85" width="6" height="2" fill="#2c2c28" />
<text x="16.8" y="274.6" font-size="8.8" fill="#646464" text-anchor="end" >7</text>
<rect x="25.5" y="268.9" width="14.8" height="10.6" fill="#ffffff" />
<rect x="25.5" y="269.9" width="14.8" height="0.8" fill="#5fd0d6" />
<rect x="27" y="273.1" width="5" height="3" fill="#8a8f98" />
<rect x="33.6" y="272.1" width="4.6" height="5.6" fill="#f0b0a8" />
<rect x="27" y="277.1" width="6" height="1.4" fill="#d06a5a" />
<text x="16.8" y="298.05" font-size="8.8" fill="#646464" text-anchor="end" >8</text>
<rect x="25.5" y="292.35" width="14.8" height="10.6" fill="#ffffff" />
<rect x="25.5" y="293.35" width="14.8" height="0.8" fill="#5fd0d6" />
<rect x="26.8" y="296.35" width="6.4" height="5.4" fill="#33363c" />
<rect x="34.4" y="296.75" width="4.6" height="4" fill="#e4e6ea" />
<text x="16.8" y="321.5" font-size="8.8" fill="#646464" text-anchor="end" >9</text>
<rect x="25.5" y="315.8" width="14.8" height="10.6" fill="#ffffff" />
<rect x="25.5" y="316.8" width="14.8" height="0.8" fill="#5fd0d6" />
<rect x="26.8" y="318.8" width="6" height="7.4" fill="#3f78d0" />
<rect x="33.6" y="319" width="6" height="4.6" fill="#8fd0c0" />
<rect x="35" y="320.2" width="2.4" height="2" fill="#ffffff" />
<text x="16.8" y="344.95" font-size="8.8" fill="#646464" text-anchor="end" >10</text>
<rect x="25.5" y="339.25" width="14.8" height="10.6" fill="#ffffff" />
<rect x="25.5" y="340.25" width="14.8" height="0.8" fill="#5fd0d6" />
<rect x="26.6" y="342.25" width="12.8" height="7.4" fill="#3a76d2" />
<rect x="30.6" y="342.25" width="0.6" height="7.4" fill="#cfe0f8" />
<rect x="34.8" y="342.25" width="0.6" height="7.4" fill="#cfe0f8" />
<text x="16.8" y="368.4" font-size="8.8" fill="#646464" text-anchor="end" >11</text>
<rect x="25.5" y="362.7" width="14.8" height="10.6" fill="#ffffff" />
<rect x="25.5" y="363.7" width="14.8" height="0.8" fill="#5fd0d6" />
<path d="M29.6 366.3h6v5.4h-6z" fill="none" stroke="#777" stroke-width="0.7" />
<rect x="31" y="367.7" width="2.6" height="2" fill="#bbb" />
<text x="16.8" y="391.85" font-size="8.8" fill="#646464" text-anchor="end" >12</text>
<rect x="25.5" y="386.15" width="14.8" height="10.6" fill="#ffffff" />
<rect x="25.5" y="387.15" width="14.8" height="0.8" fill="#5fd0d6" />
<rect x="27" y="390.55" width="9" height="0.7" fill="#99a" />
<rect x="27" y="392.95" width="6.4" height="0.7" fill="#99a" />
<rect x="27" y="394.75" width="10.6" height="1" fill="#6a7" />
<text x="16.8" y="415.3" font-size="8.8" fill="#646464" text-anchor="end" >13</text>
<rect x="25.5" y="409.6" width="14.8" height="10.6" fill="#ffffff" />
<rect x="25.5" y="410.6" width="14.8" height="0.8" fill="#5fd0d6" />
</g>
<rect x="200.2" y="123.3" width="373.2" height="279.6" fill="#ffffff" />
<rect x="200.2" y="154.9" width="373.2" height="16.4" fill="url(#tg)" />
<text x="228.5" y="201" font-size="20.1" fill="#101010" textLength="311.70" lengthAdjust="spacingAndGlyphs" font-weight="500" >几种先进等离子体加工技术的介绍</text>
<text x="380.8" y="280.2" font-size="13" fill="#1a1a1a" textLength="38.70" lengthAdjust="spacingAndGlyphs" font-weight="700" >刘忠伟</text>
<text x="360" y="304" font-size="13" fill="#161616" textLength="77.20" lengthAdjust="spacingAndGlyphs" font-weight="500" >北京印刷学院</text>
<text x="366" y="330.8" font-size="9" fill="#141414" textLength="62.30" lengthAdjust="spacingAndGlyphs" font-family='"Liberation Sans","Noto Serif CJK SC",serif' >2022年9月28日</text>
<text x="564" y="398.6" font-size="4.6" fill="#777" >1</text>
<rect x="709.6" y="117.2" width="8.8" height="294" fill="#d6d6d6" />
<rect x="709.6" y="118.4" width="8.8" height="8.4" fill="#f6f6f6" />
<path d="M712.4 123.6l1.7-2 1.7 2z" fill="#666" stroke="none" stroke-width="1" />
<rect x="709.6" y="127" width="8.8" height="10.8" fill="#fdfdfd" />
<rect x="709.6" y="368.6" width="8.8" height="8.2" fill="#ffffff" />
<path d="M712.4 371.8l1.7 2 1.7-2z" fill="#444" stroke="none" stroke-width="1" />
<rect x="709.6" y="377" width="8.8" height="34" fill="#ececec" />
<path d="M711.8 383l2.2-2.4 2.2 2.4zM711.8 385.6l2.2-2.4 2.2 2.4z" fill="#555" stroke="none" stroke-width="1" />
<path d="M711.8 390.6l2.2 2.4 2.2-2.4zM711.8 393.2l2.2 2.4 2.2-2.4z" fill="#555" stroke="none" stroke-width="1" />
<rect x="718.4" y="117.2" width="27.9" height="294" fill="#fbfbfb" />
<text x="720.6" y="130.4" font-size="6.3" fill="#4a4a4a" textLength="19.20" lengthAdjust="spacingAndGlyphs" >资源库</text>
<path d="M741.4 127.45h2.6l-1.3 1.5z" fill="#444" stroke="none" stroke-width="1" />
<rect x="718.4" y="138" width="27.9" height="0.6" fill="#ededed" />
<path d="M726.8 148.2h7.4l2.4 2.4v9h-9.8z" fill="#4c6ef5" stroke="none" stroke-width="1" />
<rect x="728.4" y="151.2" width="4.6" height="1" fill="#dfe6ff" />
<rect x="728.4" y="153.6" width="3.4" height="1" fill="#dfe6ff" />
<circle cx="736.4" cy="156.4" r="3" fill="#3a5af0" stroke="#fbfbfb" stroke-width="0.7"/>
<path d="M735 156.4l1 1 1.8-2" fill="none" stroke="#fff" stroke-width="0.7" />
<text x="728.2" y="165.8" font-size="4.6" fill="#333" textLength="9.20" lengthAdjust="spacingAndGlyphs" font-weight="700" >总结</text>
<rect x="727.4" y="177.6" width="10.6" height="10.8" fill="#d9dcf3" rx="1"/>
<rect x="729.6" y="177.6" width="6" height="6.4" fill="#eceefb" />
<text x="728.2" y="195.2" font-size="4.6" fill="#b9bbd0" textLength="9.20" lengthAdjust="spacingAndGlyphs" >教育</text>
<rect x="727.4" y="207" width="10.6" height="10.8" fill="#d9dcf3" rx="1"/>
<path d="M729 212l3.6-2.6 3.6 2.6z" fill="#f4f5fd" stroke="none" stroke-width="1" />
<rect x="729.6" y="213" width="6" height="3.4" fill="#f4f5fd" />
<text x="728.2" y="224.6" font-size="4.6" fill="#b9bbd0" textLength="9.20" lengthAdjust="spacingAndGlyphs" >党政</text>
<rect x="727.4" y="236.6" width="10.6" height="10.8" fill="#d9dcf3" rx="1"/>
<rect x="733" y="239.2" width="3.6" height="4.6" fill="#f4f5fd" />
<rect x="728.6" y="239.6" width="3" height="1" fill="#f4f5fd" />
<text x="728.2" y="254.2" font-size="4.6" fill="#b9bbd0" textLength="9.20" lengthAdjust="spacingAndGlyphs" >简历</text>
<rect x="727.4" y="266" width="10.6" height="10.8" fill="#d9dcf3" rx="1"/>
<rect x="728.6" y="269.4" width="8" height="1.2" fill="#f4f5fd" />
<rect x="728.6" y="272.6" width="5" height="1.2" fill="#f4f5fd" />
<text x="728.2" y="283.6" font-size="4.6" fill="#b9bbd0" textLength="9.20" lengthAdjust="spacingAndGlyphs" >营销</text>
<rect x="727.4" y="295.6" width="10.6" height="10.8" fill="#d9dcf3" rx="1"/>
<rect x="728.4" y="298.2" width="8.4" height="1.2" fill="#f4f5fd" />
<circle cx="729.6" cy="303" r="0.8" fill="#f4f5fd" />
<circle cx="732.6" cy="303" r="0.8" fill="#f4f5fd" />
<circle cx="735.6" cy="303" r="0.8" fill="#f4f5fd" />
<text x="728.2" y="313.2" font-size="4.6" fill="#b9bbd0" textLength="9.20" lengthAdjust="spacingAndGlyphs" >图示</text>
<circle cx="732.6" cy="331" r="6" fill="#d9dcf3" />
<circle cx="730" cy="331" r="0.7" fill="#fff" />
<circle cx="732.6" cy="331" r="0.7" fill="#fff" />
<circle cx="735.2" cy="331" r="0.7" fill="#fff" />
<text x="728.2" y="342.6" font-size="4.6" fill="#b9bbd0" textLength="9.20" lengthAdjust="spacingAndGlyphs" >更多</text>
<g transform="rotate(-24 728 364)">
<rect x="722.6" y="357.4" width="10" height="13.4" fill="#d3281f" rx="1.6"/>
</g>
<g transform="rotate(9 732 363)">
<rect x="726.2" y="355.2" width="11.4" height="15.8" fill="#ec3b30" rx="1.8"/>
<path d="M726.2 358.6q5.7 4.4 11.4 0" fill="none" stroke="#b81f1f" stroke-width="0.8" />
<circle cx="731.9" cy="361.6" r="1.1" fill="#f9c04a" />
</g>
<circle cx="737.9" cy="364.7" r="3.3" fill="#ffb43a" />
<circle cx="737.9" cy="364.7" r="1.9" fill="#ffd47a" />
<path d="M740.6 352.4l2 2m0-2l-2 2" fill="none" stroke="#9a9a9a" stroke-width="0.6" />
<text x="4.8" y="419.6" font-size="6.4" fill="#4f4f4f" textLength="36.80" lengthAdjust="spacingAndGlyphs" >Slide 1 of 100</text>
<path d="M52.6 414.4h3.2v6h-3.2zM55.8 414.4h3.4v6h-3.4z" fill="none" stroke="#666" stroke-width="0.6" />
<path d="M57 416.2l1.4 2.4m0-2.4l-1.4 2.4" fill="none" stroke="#666" stroke-width="0.5" />
<text x="70.6" y="419.6" font-size="6.4" fill="#4f4f4f" textLength="60.60" lengthAdjust="spacingAndGlyphs" >English (United States)</text>
<circle cx="143.4" cy="417" r="2.6" fill="none" stroke="#555" stroke-width="0.8"/>
<path d="M141.2 419.2c0.4 2 3.4 2.2 4.6 1.2m-.4-2l.600 2.2-2.2.2" fill="none" stroke="#555" stroke-width="0.7" />
<text x="150" y="419.6" font-size="6.4" fill="#4f4f4f" textLength="66.40" lengthAdjust="spacingAndGlyphs" >Accessibility: Unavailable</text>
<path d="M453.6 417.4h5.6m-5.6 1.8h5.6m-4.2-3.4l1.4-1.4 1.4 1.4" fill="none" stroke="#666" stroke-width="0.7" />
<text x="462.8" y="419.6" font-size="6.4" fill="#4f4f4f" textLength="16.00" lengthAdjust="spacingAndGlyphs" >Notes</text>
<path d="M489.6 413.6h7.6v5h-4.4l-1.6 1.8v-1.8h-1.6z" fill="#4a4a4a" stroke="none" stroke-width="1" />
<text x="499.6" y="419.6" font-size="6.4" fill="#4f4f4f" textLength="29.40" lengthAdjust="spacingAndGlyphs" >Comments</text>
<rect x="540" y="411" width="23" height="12.2" fill="#c9c9c9" />
<path d="M548.2 414.2h6.8v6h-6.8z" fill="none" stroke="#6a6a6a" stroke-width="0.7" />
<path d="M550.2 415.6h3.2v3.2h-3.2z" fill="none" stroke="#6a6a6a" stroke-width="0.6" />
<path d="M571.4 414.2h2.6v2.4h-2.6z" fill="none" stroke="#7a7a7a" stroke-width="0.6" />
<path d="M571.4 417.4h2.6v2.4h-2.6z" fill="none" stroke="#7a7a7a" stroke-width="0.6" />
<path d="M574.8 414.2h2.6v2.4h-2.6z" fill="none" stroke="#7a7a7a" stroke-width="0.6" />
<path d="M574.8 417.4h2.6v2.4h-2.6z" fill="none" stroke="#7a7a7a" stroke-width="0.6" />
<rect x="594.4" y="414.4" width="2.6" height="1.2" fill="#8a8a8a" />
<rect x="594.4" y="416.6" width="2.6" height="1.2" fill="#8a8a8a" />
<rect x="594.4" y="418.8" width="2.6" height="1.2" fill="#8a8a8a" />
<rect x="597.8" y="414.4" width="2.6" height="1.2" fill="#8a8a8a" />
<rect x="597.8" y="416.6" width="2.6" height="1.2" fill="#8a8a8a" />
<rect x="597.8" y="418.8" width="2.6" height="1.2" fill="#8a8a8a" />
<path d="M617.6 414.2h7.2m-6.4 0v3.8h5.6v-3.8m-2.8 3.8v1.8m-1.6 1.2h3.2" fill="none" stroke="#777" stroke-width="0.7" />
<rect x="636.2" y="417.2" width="3.2" height="0.7" fill="#555" />
<rect x="644.2" y="417.2" width="56.4" height="0.7" fill="#6e6e6e" />
<rect x="672.2" y="415.6" width="0.7" height="3.8" fill="#6e6e6e" />
<rect x="661.6" y="413.8" width="2.2" height="7.4" fill="#4a4a4a" />
<path d="M704.2 417.5h4m-2-2v4" fill="none" stroke="#555" stroke-width="0.7" />
<text x="716" y="419.6" font-size="6.4" fill="#4f4f4f" textLength="11.80" lengthAdjust="spacingAndGlyphs" >67%</text>
<path d="M737.4 414.2h6v6h-6z" fill="none" stroke="#777" stroke-width="0.7" />
<path d="M738.6 415.4l1.4 1.4m3.4 2.2l-1.4-1.4m1.4-2.2l-1.4 1.4m-2 .8l-1.4 1.4" fill="none" stroke="#777" stroke-width="0.6" />
<rect x="0" y="449" width="102.6" height="9" fill="#1b1c1e" />
<path d="M1.6 450.8h5.4v3.8h-5.4z" fill="#ffffff" stroke="none" stroke-width="1" />
<rect x="3.2" y="455" width="2.2" height="1.2" fill="#ffffff" />
<rect x="2.2" y="456" width="4.2" height="0.7" fill="#fff" />
<rect x="10.6" y="450.4" width="2.2" height="3.8" fill="#ffffff" rx="1.1"/>
<path d="M9.6 453.2a2.1 2.1 0 0 0 4.2 0M11.7 455.4v1.4" fill="none" stroke="#fff" stroke-width="0.7" />
<text x="17.2" y="456.4" font-size="6.2" fill="#ffffff" textLength="83.60" lengthAdjust="spacingAndGlyphs" >刘忠伟-北京印刷学院的屏幕共享</text>
<rect x="745.6" y="26" width="0.9" height="398" fill="#3a3b3d" />
<rect x="751" y="3.6" width="125" height="70.6" fill="#232528" />
<rect x="751" y="78.5" width="125" height="70.6" fill="#232528" />
<rect x="751" y="153.5" width="125" height="70.6" fill="#232528" />
<rect x="751" y="228.5" width="125" height="70.6" fill="#232528" />
<rect x="751" y="303.2" width="125" height="70.6" fill="#232528" />
<rect x="751" y="377.8" width="125" height="70.6" fill="#232528" />
<g clip-path="url(#a1)"><g filter="url(#bl)">
<rect x="794" y="16" width="40" height="40" fill="url(#catbg)" />
<path d="M796 56q1-13 11-17l14 0q8 4 9 17z" fill="#e9e1d6" stroke="none" stroke-width="1" />
<path d="M798.5 56q1.5-11.5 9.5-15.5l12.5 0q7 4 8 15.5z" fill="#cfa57c" stroke="none" stroke-width="1" />
<path d="M800 56q2-9 8-13l5 1 1 12z" fill="#e6d3bd" stroke="none" stroke-width="1" />
<path d="M806 27.5l1.2-8.7 5.8 4.4zM825.4 29.5l-.4-7.5-5.6 3.4z" fill="#c8a288" stroke="none" stroke-width="1" />
<ellipse cx="815.6" cy="31.4" rx="10.2" ry="8.8" fill="#a98868"/>
<ellipse cx="815.6" cy="36" rx="7.6" ry="5.6" fill="#e2d2c0"/>
<path d="M806.5 28q9-5 18.5 0l-1 3q-8.5-3-16.5 0z" fill="#8a6c50" stroke="none" stroke-width="1" />
<circle cx="812.8" cy="32.6" r="3" fill="#dcdad2" stroke="#2a2622" stroke-width="0.9"/>
<circle cx="819.8" cy="33.2" r="2.7" fill="#b9a48e" stroke="#2a2622" stroke-width="0.9"/>
<path d="M814.6 40.2l4.4 .2 1 13.6-6.4 0z" fill="#c4202a" stroke="none" stroke-width="1" />
<path d="M807.5 38q7.5 4 14.5 1" fill="none" stroke="#c63a3a" stroke-width="1" />
</g></g>
<rect x="751.6" y="65.6" width="24.4" height="7.6" fill="#17181a" />
<rect x="755.2" y="66.8" width="2" height="3.4" fill="#ffffff" rx="1"/>
<path d="M754.2 69.4a2 2 0 0 0 4 0M756.2 71.4v1.2" fill="none" stroke="#fff" stroke-width="0.6" />
<path d="M753.8 72.4l5.2-6" fill="none" stroke="#e5483c" stroke-width="0.9" />
<text x="761.6" y="71.5" font-size="5.4" fill="#ffffff" textLength="13.40" lengthAdjust="spacingAndGlyphs" >张洪振</text>
<g clip-path="url(#v2)"><g filter="url(#bl)">
<rect x="745" y="72" width="140" height="84" fill="url(#wall)" />
<rect x="745" y="72" width="140" height="8" fill="#9aa6b2" opacity="0.6"/>
<rect x="749" y="115.4" width="34.4" height="40" fill="#a4abb3" />
<rect x="749" y="115.4" width="34.4" height="1.6" fill="#8c939b" />
<rect x="756.6" y="117.8" width="9" height="22.4" fill="#596571" />
<rect x="768" y="117.8" width="9" height="22.4" fill="#5b6672" />
<rect x="757.4" y="119" width="7.4" height="5" fill="#3d4752" />
<rect x="768.8" y="119" width="7.4" height="5" fill="#414b56" />
<rect x="757.4" y="126.6" width="7.4" height="3.4" fill="#8b8266" />
<rect x="757.4" y="131.6" width="7.4" height="8" fill="#a9b0c2" />
<rect x="768.8" y="124.6" width="3" height="4" fill="#b9a36a" />
<rect x="768.8" y="131" width="7.4" height="8.6" fill="#aab2c4" />
<rect x="778.6" y="120" width="4" height="18" fill="#c3c8ce" />
<rect x="752.4" y="106.4" width="8" height="8.6" fill="#8a6a2c" rx="2"/>
<rect x="753" y="110.6" width="7" height="4.4" fill="#35302a" />
<rect x="766.4" y="107.4" width="8" height="4" fill="#cdd4dc" rx="1.5"/>
<rect x="764.4" y="111" width="11.6" height="4.2" fill="#2b4c9c" rx="1.5"/>
<rect x="776" y="108.2" width="6.6" height="6.8" fill="#b3ab9c" />
<rect x="830.4" y="113" width="31" height="44" fill="#4e2526" />
<rect x="860.4" y="111.8" width="20" height="46" fill="#5b2c2d" />
<rect x="830.4" y="113" width="31" height="1.4" fill="#3c1c1d" />
<rect x="833.4" y="117.2" width="10.2" height="30" fill="#3b434b" />
<rect x="848.4" y="117.2" width="10.2" height="30" fill="#3d454d" />
<rect x="834.2" y="118.6" width="8.6" height="7.2" fill="#56687a" />
<rect x="839" y="120" width="3.4" height="5.8" fill="#aab9b4" />
<rect x="834.2" y="129" width="8.6" height="9.6" fill="#8f9dab" />
<rect x="836" y="130" width="3" height="8.6" fill="#c4ccd4" />
<rect x="834.2" y="141.6" width="8.6" height="5" fill="#6f7b86" />
<rect x="849.2" y="119" width="8.6" height="6.8" fill="#5f7182" />
<rect x="852" y="120.4" width="3" height="5.4" fill="#9fb0a8" />
<rect x="849.2" y="129" width="8.6" height="9.6" fill="#9aa8b6" />
<rect x="851" y="130" width="4" height="8.6" fill="#c9d1d9" />
<rect x="849.2" y="141.6" width="8.6" height="5" fill="#75818c" />
<rect x="844.8" y="104.6" width="13.8" height="8.4" fill="#a98f6b" />
<rect x="846" y="105.6" width="11.4" height="1.2" fill="#bca481" />
<rect x="831" y="110" width="8.4" height="3.2" fill="#8b816a" />
<rect x="847.8" y="99.8" width="9.6" height="4.8" fill="#6b7fb8" />
<rect x="849.6" y="99.4" width="4.6" height="2.6" fill="#d4dbe9" />
<rect x="868.2" y="105.8" width="9" height="6.4" fill="#2c6a5c" />
<rect x="862.2" y="106.4" width="4.8" height="4.4" fill="#c7a732" />
<rect x="859.6" y="102.6" width="1" height="4" fill="#7c8794" />
<path d="M790.9 152v-18.6q0-3.8 3.8-3.8h36.2q3.8 0 3.8 3.8v18.6z" fill="#0d0e11" stroke="none" stroke-width="1" />
<path d="M794 152q1-9 12-11.6l7 3 8-3.6q15 2.6 21.6 12.2z" fill="#262a3a" stroke="none" stroke-width="1" />
<path d="M806.4 136h13.2v7.6l-6.4 3.6-6.8-3.6z" fill="#b78d7a" stroke="none" stroke-width="1" />
<ellipse cx="800.4" cy="123.6" rx="1.6" ry="3.4" fill="#b98e7c"/><ellipse cx="826.6" cy="123.8" rx="1.6" ry="3.4" fill="#c09582"/>
<path d="M800.6 116q0-8 12.4-8t12.8 8v8q0 6-3.2 11-3.6 6.8-9.4 6.8t-9.4-6.8q-3.2-5-3.2-11z" fill="url(#skin)" stroke="none" stroke-width="1" />
<path d="M800 119.6q-1.2-16.2 13-16.2t13 16.8l-1.4 1q-.4-7.4-3.6-9.8-8-2.4-16.2.2-2.8 2.4-3.2 8.8z" fill="#201f21" stroke="none" stroke-width="1" />
</g>
<g filter="url(#bl)" opacity="0.6">
<rect x="804.2" y="117.5" width="5.6" height="1.1" fill="#3a2a26" />
<rect x="815" y="117.5" width="5.6" height="1.1" fill="#3a2a26" />
<rect x="804.6" y="120" width="5" height="1.5" fill="#3c2c2a" />
<rect x="815.2" y="120" width="5" height="1.5" fill="#3c2c2a" />
<rect x="811" y="127" width="3.4" height="1.3" fill="#a5776a" />
<rect x="808" y="131.8" width="9" height="1.5" fill="#9c5f5e" />
<rect x="809.6" y="134.6" width="6" height="1" fill="#b58a7a" />
</g></g>
<rect x="751.6" y="141.2" width="52.4" height="7.2" fill="#17181a" opacity="0.82"/>
<rect x="754.6" y="141.9" width="2" height="3.4" fill="#ffffff" rx="1"/>
<path d="M753.6 144.5a2 2 0 0 0 4 0M755.6 146.5v1.2" fill="none" stroke="#fff" stroke-width="0.6" />
<text x="761" y="147.1" font-size="5.4" fill="#ffffff" textLength="41.60" lengthAdjust="spacingAndGlyphs" >刘忠伟-北京印刷学院</text>
<g clip-path="url(#a3)">
<rect x="796" y="167" width="36" height="36" fill="url(#sun)" />
</g>
<rect x="751.6" y="215.8" width="7.6" height="8" fill="#f08a24" />
<circle cx="755.4" cy="218.4" r="1.3" fill="#fff" />
<path d="M753.2 222.8a2.2 2.2 0 0 1 4.4 0z" fill="#fff" stroke="none" stroke-width="1" />
<rect x="760" y="216" width="13.4" height="7.6" fill="#17181a" />
<rect x="763" y="217.2" width="2" height="3.4" fill="#ffffff" rx="1"/>
<path d="M762 219.8a2 2 0 0 0 4 0M764 221.8v1.2" fill="none" stroke="#fff" stroke-width="0.6" />
<path d="M761.6 222.8l5.2-6" fill="none" stroke="#e5483c" stroke-width="0.9" />
<text x="767.8" y="221.8" font-size="4.8" fill="#fff" >晴</text>
<g clip-path="url(#a4)"><g filter="url(#bl)">
<rect x="794" y="241" width="40" height="40" fill="url(#an)" />
<path d="M798 282l5-13 7-5 9-1 9 4 5 15z" fill="#121317" stroke="none" stroke-width="1" />
<ellipse cx="815.4" cy="259.4" rx="7.2" ry="7.8" fill="#ece5e1"/>
<path d="M802.5 266q-3-19 10.5-22.5 15.5-2 15 17.5l-2.5 3q-1-10-6-13.5-3 7.5-10 9-2.5 2-4 7.5z" fill="#2a2e37" stroke="none" stroke-width="1" />
<path d="M806 252l-3 6 1.5 5zM826 250l3 7-1.5 4z" fill="#30343e" stroke="none" stroke-width="1" />
<rect x="811" y="260.6" width="3.2" height="1.5" fill="#de8c64" />
<rect x="817.6" y="260.6" width="3.2" height="1.5" fill="#de8c64" />
<path d="M808.5 281l3.5-11.5 2.5 2-2.5 9.5z" fill="#e9e5e1" stroke="none" stroke-width="1" />
<path d="M815 268l3 3 3-2.5-2 5.5z" fill="#d8c8c2" stroke="none" stroke-width="1" />
</g></g>
<rect x="751.6" y="290.6" width="43" height="7.6" fill="#17181a" />
<rect x="755.2" y="291.8" width="2" height="3.4" fill="#ffffff" rx="1"/>
<path d="M754.2 294.4a2 2 0 0 0 4 0M756.2 296.4v1.2" fill="none" stroke="#fff" stroke-width="0.6" />
<path d="M753.8 297.4l5.2-6" fill="none" stroke="#e5483c" stroke-width="0.9" />
<text x="761.6" y="296.5" font-size="5.4" fill="#ffffff" textLength="32.00" lengthAdjust="spacingAndGlyphs" >电气1905江乐乾</text>
<g clip-path="url(#a5)"><g filter="url(#bl)">
<rect x="794" y="315" width="40" height="42" fill="#dedad6" />
<g transform="rotate(-5 813 335)">
<rect x="793" y="319.6" width="34.4" height="26.4" fill="url(#pk)" />
<path d="M793 346v-9.5l12.5-6.5 14 16z" fill="#30262c" stroke="none" stroke-width="1" />
<path d="M805 330l14 9.5" fill="none" stroke="#8a7a86" stroke-width="0.7" />
</g>
<path d="M826 318.5l3.2-.5 5.3 27-4.5 .5z" fill="#e6e2de" stroke="none" stroke-width="1" />
<rect x="794" y="349.6" width="40" height="8" fill="#2a2c2f" transform="rotate(-5 813 350)"/>
</g></g>
<rect x="751.6" y="365.4" width="43" height="7.6" fill="#17181a" />
<rect x="755.2" y="366.6" width="2" height="3.4" fill="#ffffff" rx="1"/>
<path d="M754.2 369.2a2 2 0 0 0 4 0M756.2 371.2v1.2" fill="none" stroke="#fff" stroke-width="0.6" />
<path d="M753.8 372.2l5.2-6" fill="none" stroke="#e5483c" stroke-width="0.9" />
<text x="761.6" y="371.3" font-size="5.4" fill="#ffffff" textLength="32.00" lengthAdjust="spacingAndGlyphs" >电气1901李霞翀</text>
<g clip-path="url(#a6)"><g filter="url(#bl)">
<rect x="794" y="391" width="40" height="22" fill="url(#sky)" />
<rect x="794" y="411" width="40" height="20" fill="#6b5c52" />
<rect x="794" y="407.4" width="40" height="5.6" fill="#9a9ca8" />
<rect x="821.6" y="401" width="3.2" height="11" fill="#626c80" />
<rect x="817.2" y="403.6" width="2.6" height="8" fill="#74809a" />
<rect x="825.6" y="405" width="3.4" height="7" fill="#888c98" />
<rect x="801.5" y="405" width="3.2" height="7" fill="#d9d5cd" />
<rect x="797.5" y="406" width="2.6" height="6" fill="#b9b5ad" />
<rect x="806" y="407" width="4" height="5" fill="#a4a2a6" />
<rect x="829.5" y="406.5" width="3" height="6" fill="#7a7e8a" />
<rect x="794" y="412.6" width="40" height="3.4" fill="#8c8078" />
<rect x="796.5" y="415.2" width="12" height="3" fill="#ebe3d3" />
<rect x="798" y="418.2" width="9.5" height="9" fill="#c9a57c" />
<rect x="798" y="421" width="9.5" height="1" fill="#a98a66" />
<rect x="823.5" y="413" width="9" height="12" fill="#5a5656" />
<rect x="824" y="418" width="8" height="1" fill="#787272" />
<path d="M811 430l1-12q.6-4 3.8-4t3.8 4l1.4 12z" fill="#8a6036" stroke="none" stroke-width="1" />
<circle cx="815.4" cy="412.8" r="2.5" fill="#34241c" />
<circle cx="820" cy="418.2" r="1.3" fill="#deb090" />
</g></g>
<rect x="751.6" y="440" width="19.6" height="7.6" fill="#17181a" />
<rect x="755.2" y="441.2" width="2" height="3.4" fill="#ffffff" rx="1"/>
<path d="M754.2 443.8a2 2 0 0 0 4 0M756.2 445.8v1.2" fill="none" stroke="#fff" stroke-width="0.6" />
<path d="M753.8 446.8l5.2-6" fill="none" stroke="#e5483c" stroke-width="0.9" />
<text x="761.6" y="445.9" font-size="5.4" fill="#ffffff" textLength="8.80" lengthAdjust="spacingAndGlyphs" >周航</text>
</svg>
</body></html>
